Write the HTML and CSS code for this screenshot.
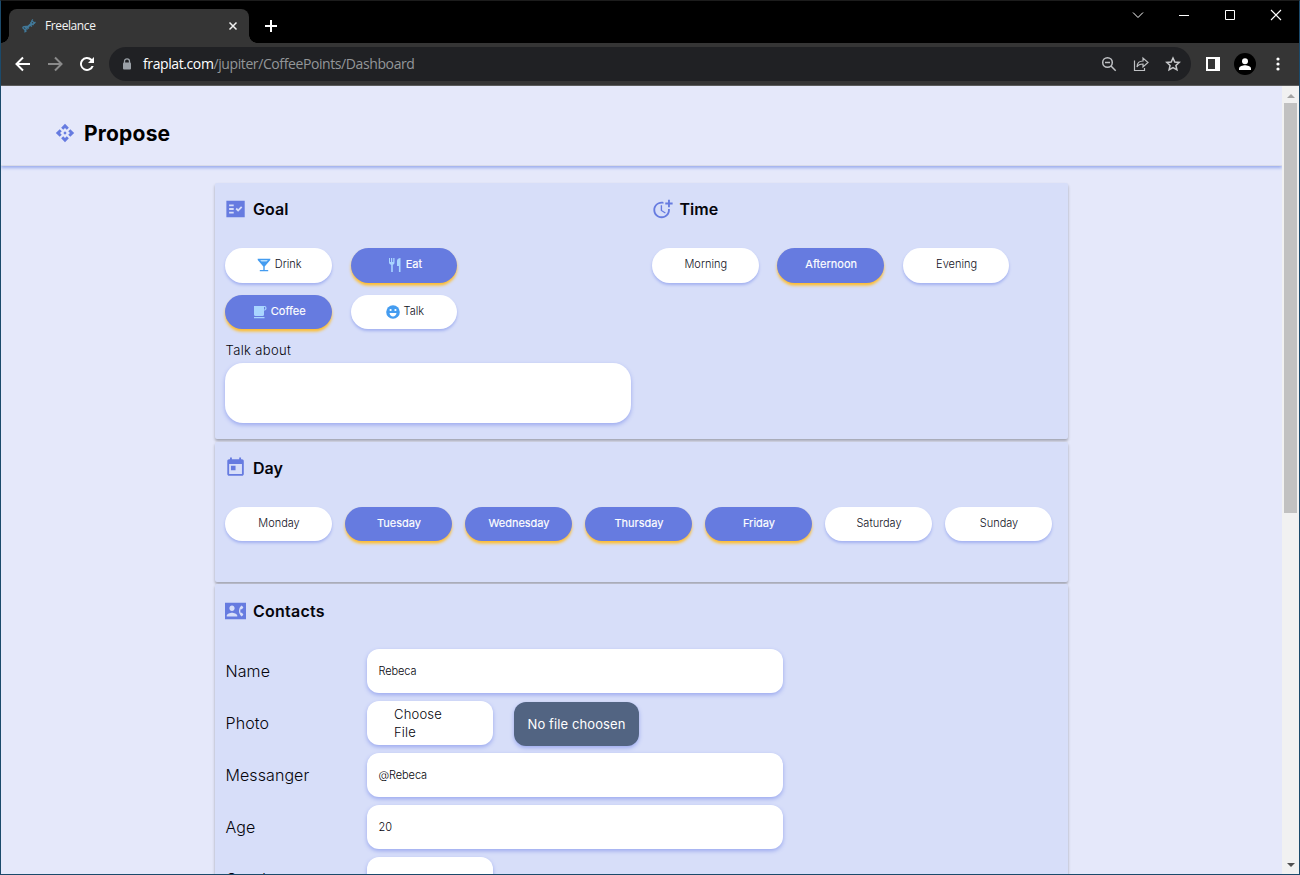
FILE: index.html
```html
<!DOCTYPE html>
<html lang="en">
<head>
<meta charset="utf-8">
<title>Freelance</title>
<link rel="stylesheet" href="styles.css">
</head>
<body>
<div class="window">
  <div class="titlebar">
    <div class="tab">
      <svg class="favicon" width="16" height="16" viewBox="0 0 16 16" fill="none" stroke="#41799a" stroke-width="1.200"><path d="M1.500 9.500C4 7 7 9.500 9 7.500S9.500 3 12 1.500M4 14.500C3 11 5 11.500 6.500 9.500S11 7.500 14.500 4M1.500 9.500l4 4M3.500 8.500l3 3M6 8.500l2 2M8 6.500l3 2M9.200 4.500l3.500 2.500M10.500 2.500l3.500 3M5.500 9.500L9.500 6"/></svg>
      <span class="tab-title">Freelance</span>
      <svg class="tab-close" width="10" height="10" viewBox="0 0 10 10" stroke="#f1f1f1" stroke-width="1.500"><path d="M1.500 1.500l7 7M8.500 1.500l-7 7"/></svg>
    </div>
    <svg class="new-tab" width="12" height="12" viewBox="0 0 12 12" stroke="#fff" stroke-width="2"><path d="M6 0v12M0 6h12"/></svg>
    <div class="controls">
      <svg width="12" height="12" viewBox="0 0 12 12" fill="none" stroke="#fff"><path d="M1 3.500l5 5 5-5"/></svg>
      <svg width="12" height="12" viewBox="0 0 12 12" fill="none" stroke="#fff"><path d="M1 6.500h10"/></svg>
      <svg width="12" height="12" viewBox="0 0 12 12" fill="none" stroke="#fff"><path d="M1.500 1.500h9v9h-9z"/></svg>
      <svg width="12" height="12" viewBox="0 0 12 12" fill="none" stroke="#fff" stroke-width="1.100"><path d="M1 1l10 10M11 1L1 11"/></svg>
    </div>
  </div>
  <div class="toolbar">
    <div class="nav">
      <svg width="16" height="16" viewBox="0 0 16 16" fill="none" stroke="#fff" stroke-width="2"><path d="M15 8H2M8 1.500L1.500 8 8 14.500"/></svg>
      <svg width="16" height="16" viewBox="0 0 16 16" fill="none" stroke="#8a8a8a" stroke-width="2"><path d="M1 8h13M8 1.500L14.500 8 8 14.500"/></svg>
      <svg width="16" height="16" viewBox="0 0 16 16"><path d="M13 3A7 7 0 1 0 14.700 10h-2.200A5 5 0 1 1 11.500 4.500L9 7h6V1z" fill="#fff"/></svg>
    </div>
    <div class="omnibox">
      <svg class="lock" width="10" height="12" viewBox="0 0 10 12"><path d="M2.500 5V3.300a2.500 2.500 0 0 1 5 0V5" fill="none" stroke="#9aa0a6" stroke-width="1.300"/><rect x="1" y="4.500" width="8" height="7" rx="1" fill="#9aa0a6"/></svg>
      <span class="url"><span class="host">fraplat.com</span>/jupiter/CoffeePoints/Dashboard</span>
      <div class="omni-icons">
        <svg width="16" height="16" viewBox="0 0 16 16" fill="none" stroke="#bfc1c4" stroke-width="1.500"><circle cx="6.500" cy="6.500" r="4.800"/><path d="M10 10l4.700 4.700M4 6.500h5"/></svg>
        <svg width="16" height="16" viewBox="0 0 16 16" fill="none" stroke="#bfc1c4" stroke-width="1.200"><path d="M1.500 4.500v10h10v-2.500M4 11c0-4 2.500-6 6-6V2l5 4.500-5 4.500V8C7 8 5 9 4 11z"/></svg>
        <svg width="16" height="16" viewBox="0 0 16 16" fill="none" stroke="#c8cacc" stroke-width="1.500"><path d="M8 2l1.800 4 4.400.4-3.300 3 1 4.400L8 11.500l-3.900 2.300 1-4.400-3.300-3L6.200 6z"/></svg>
      </div>
    </div>
    <svg class="panel" width="14" height="14" viewBox="0 0 14 14"><path fill="#fff" fill-rule="evenodd" d="M0 0h14v14H0zM2 2v10h7V2z"/></svg>
    <svg class="profile" width="22" height="22" viewBox="0 0 22 22"><circle cx="11" cy="11" r="11" fill="#000"/><circle cx="11" cy="8.200" r="3" fill="#fff"/><path d="M5 17v-1.500c0-2.500 4-3.300 6-3.300s6 .8 6 3.300V17z" fill="#fff"/></svg>
    <svg class="dots" width="4" height="14" viewBox="0 0 4 14" fill="#fff"><circle cx="2" cy="2" r="1.600"/><circle cx="2" cy="7" r="1.600"/><circle cx="2" cy="12" r="1.600"/></svg>
  </div>
  <div class="viewport">
    <main class="page">
      <header class="page-header">
        <svg width="20" height="20" viewBox="0 0 24 24" fill="#667be0"><path d="M14 12l-2 2-2-2 2-2 2 2zm-2-6l2.120 2.120 2.500-2.500L12 1 7.380 5.620l2.500 2.500L12 6zm-6 6l2.120-2.120-2.500-2.500L1 12l4.620 4.620 2.500-2.500L6 12zm12 0l-2.120 2.120 2.500 2.500L23 12l-4.620-4.620-2.500 2.500L18 12zm-6 6l-2.120-2.120-2.500 2.500L12 23l4.620-4.620-2.500-2.500L12 18z"/></svg>
        <h1>Propose</h1>
      </header>
      <div class="cards">
        <section class="card card-goal">
          <div class="half">
            <h2><svg width="22" height="22" viewBox="0.500 0 24 24"><path fill="#667be0" fill-rule="evenodd" d="M22 3H2v18h20zM10 17H5v-2h5zm0-4H5v-2h5zm0-4H5V7h5zm4.820 6L12 12.160l1.410-1.410 1.410 1.420L17.990 9l1.420 1.420z"/></svg><span>Goal</span></h2>
            <div class="chips wide">
              <div class="chip"><svg width="14" height="14" viewBox="2 2 20 20"><path fill="#449cf0" d="M21 5V3H3v2l8 9v5H6v2h12v-2h-5v-5z"/><path fill="#b5deff" d="M6.500 5h11l-1.800 2H8.300z"/></svg><span>Drink</span></div>
              <div class="chip on"><svg width="14" height="14" viewBox="0 0 14 14"><path fill="#a9d5ff" d="M1 0h1v4h1V0h1.200v4h1V0h1.300v4.500c0 1.400-.8 2-1.700 2.300V14H3.200V6.800C2 6.500 1 5.800 1 4.500zM9 3c0-1.700 1.300-2.700 3.500-3v14h-1.600V8H9z"/></svg><span>Eat</span></div>
              <div class="chip on"><svg width="14" height="14" viewBox="0 0 14 14"><path fill="#a9d5ff" fill-rule="evenodd" d="M1 1h10.500a2 2 0 0 1 2 2v.5a2 2 0 0 1-2 2H11V9.500a1.500 1.500 0 0 1-1.500 1.500h-7A1.500 1.500 0 0 1 1 9.500zM11 2v2.500h1.200V2zM1 12h10.500v1.300H1z"/></svg><span>Coffee</span></div>
              <div class="chip"><svg width="14" height="14" viewBox="0 0 14 14"><circle cx="7" cy="7" r="6.800" fill="#449cf0"/><circle cx="4.600" cy="5" r="1.100" fill="#fff"/><circle cx="9.400" cy="5" r="1.100" fill="#fff"/><path d="M3.500 8h7c-.4 2.300-1.700 3.400-3.500 3.400S3.900 10.300 3.500 8z" fill="#fff"/></svg><span>Talk</span></div>
            </div>
            <label class="talk-label" for="about">Talk about</label>
            <textarea class="talk-box" id="about"></textarea>
          </div>
          <div class="half">
            <h2><svg width="22" height="22" viewBox="0.500 0 24 24" fill="#667be0"><path d="M10 8v6l4.700 2.900.8-1.200-4-2.400V8z"/><path d="M17.920 12c.05.330.080.660.080 1 0 3.900-3.100 7-7 7s-7-3.100-7-7 3.100-7 7-7c.7 0 1.370.1 2 .29V4.230C12.360 4.080 11.690 4 11 4c-5 0-9 4-9 9s4 9 9 9 9-4 9-9c0-.34-.02-.67-.06-1z"/><path d="M20 5V2h-2v3h-3v2h3v3h2V7h3V5z"/></svg><span>Time</span></h2>
            <div class="chips wide">
              <div class="chip">Morning</div>
              <div class="chip on">Afternoon</div>
              <div class="chip">Evening</div>
            </div>
          </div>
        </section>
        <section class="card card-day">
          <h2><svg width="22" height="22" viewBox="0.500 0.500 24 24" fill="#667be0"><path d="M19 3h-1V1h-2v2H8V1H6v2H5c-1.110 0-2 .9-2 2v14c0 1.100.89 2 2 2h14c1.100 0 2-.9 2-2V5c0-1.100-.9-2-2-2zm0 16H5V8h14zM7 10h5v5H7z"/></svg><span>Day</span></h2>
          <div class="chips">
            <div class="chip">Monday</div>
            <div class="chip on">Tuesday</div>
            <div class="chip on">Wednesday</div>
            <div class="chip on">Thursday</div>
            <div class="chip on">Friday</div>
            <div class="chip">Saturday</div>
            <div class="chip">Sunday</div>
          </div>
        </section>
        <section class="card card-contacts">
          <h2><svg width="21" height="22" viewBox="0 0 24 24" preserveAspectRatio="none"><path fill="#667be0" fill-rule="evenodd" d="M24 3H0v18h24zM8 6c1.660 0 3 1.340 3 3s-1.340 3-3 3-3-1.340-3-3 1.340-3 3-3zm6 12H2v-1c0-2 4-3.100 6-3.100s6 1.100 6 3.100zm3.850-4h1.640L21 16l-1.990 1.990c-1.310-.98-2.280-2.380-2.730-3.990-.18-.64-.28-1.310-.28-2s.1-1.360.28-2c.45-1.620 1.420-3.010 2.730-3.990L21 8l-1.510 2h-1.640c-.22.63-.35 1.300-.35 2s.13 1.370.35 2z"/></svg><span>Contacts</span></h2>
          <div class="form">
            <div class="row"><span class="label">Name</span><div class="input">Rebeca</div></div>
            <div class="row"><span class="label">Photo</span><div class="file">Choose File</div><div class="status">No file choosen</div></div>
            <div class="row"><span class="label">Messanger</span><div class="input">@Rebeca</div></div>
            <div class="row"><span class="label">Age</span><div class="input">20</div></div>
            <div class="row"><span class="label">Gender</span><div class="file"></div></div>
          </div>
        </section>
      </div>
    </main>
    <div class="scrollbar">
      <svg width="8" height="4" viewBox="0 0 8 4"><path d="M0 4l4-4 4 4z" fill="#a3a3a3"/></svg>
      <div class="thumb"></div>
      <svg class="down" width="8" height="4" viewBox="0 0 8 4"><path d="M0 0l4 4 4-4z" fill="#505050"/></svg>
    </div>
  </div>
</div>
</body>
</html>
```
FILE: styles.css
```css
* { box-sizing: border-box; }
body { margin: 0; font-family: Inter, "Liberation Sans", sans-serif; color: #05050c; overflow: hidden; }
svg { display: block; flex: none; }
h1, h2 { margin: 0; font-weight: 600; }

.window { width: 1300px; height: 875px; display: flex; flex-direction: column; border: 1px solid #1b4a6b; border-top-color: #1c1c1c; }

.titlebar { height: 42px; flex: none; background: #000; display: flex; align-items: center; font-family: "Open Sans", "Noto Sans", sans-serif; }
.tab { align-self: flex-end; width: 240px; height: 34px; margin-left: 8px; background: #353535; border-radius: 8px 8px 0 0; display: flex; align-items: center; padding: 0 11px 0 12px; position: relative; }
.tab::before, .tab::after { content: ""; position: absolute; bottom: 0; width: 8px; height: 8px; }
.tab::before { left: -8px; background: radial-gradient(circle at 0 0, #000 7.500px, #353535 8px); }
.tab::after { right: -8px; background: radial-gradient(circle at 100% 0, #000 7.500px, #353535 8px); }
.tab-title { margin-left: 8px; font-size: 12px; letter-spacing: -.4px; color: #f4f4f4; flex: 1; padding-bottom: 1px; }
.new-tab { margin: 8px 0 0 16px; }
.controls { margin: 0 17px 14px auto; display: flex; gap: 34px; }

.toolbar { height: 43px; flex: none; background: #353535; border-bottom: 1px solid #5b5b5b; display: flex; align-items: center; padding-left: 14px; }
.nav { display: flex; gap: 16px; }
.omnibox { width: 1082px; height: 34px; margin-left: 14px; background: #202124; border-radius: 17px; display: flex; align-items: center; padding: 0 10px 0 13px; font-family: "Open Sans", "Noto Sans", sans-serif; }
.url { margin-left: 11px; font-size: 14px; letter-spacing: -.4px; color: #939699; flex: 1; padding-bottom: 1px; }
.host { color: #fff; }
.omni-icons { display: flex; gap: 16px; }
.panel { margin-left: 15px; }
.profile { margin-left: 14px; }
.dots { margin-left: 19.500px; }

.viewport { flex: 1; min-height: 0; display: flex; }
.page { flex: 1; background: #e5e8fa; overflow: hidden; }
.page-header { height: 80px; border-bottom: 1px solid #d9dbe8; box-shadow: 0 2px 3px #9badee; display: flex; align-items: center; padding: 15px 0 0 54px; }
.page-header h1 { font-size: 21px; letter-spacing: .2px; margin-left: 9px; font-weight: 700; color: #000; }

.cards { margin: 17px 0 0 214px; width: 853px; display: flex; flex-direction: column; gap: 2.500px; }
.card { background: #d7def9; padding: 14px 10px 0; box-shadow: 0 2px 3px rgba(0,0,0,.3); border-radius: 2px; flex: none; }
.card h2 { display: flex; align-items: center; height: 24px; font-size: 16px; letter-spacing: .05px; }
.card h2 span { margin-left: 6px; }
.half + .half h2 span { margin-left: 5.500px; }
.card-goal { height: 256px; display: grid; grid-template-columns: 427px 1fr; }
.card-day { height: 140px; }
.card-contacts { height: 400px; padding-top: 14.500px; }
.card-contacts h2 { letter-spacing: .25px; }
.card-contacts h2 span { margin-left: 7px; }

.chips { display: grid; grid-template-columns: repeat(7, 107px); column-gap: 13px; row-gap: 12px; margin-top: 27px; }
.chips.wide { grid-template-columns: repeat(2, 106.500px); column-gap: 19.100px; }
.half + .half .chips { grid-template-columns: repeat(3, 106.600px); column-gap: 18.800px; }
.chip { height: 34.500px; border-radius: 18px; background: #fff; box-shadow: 0 2px 3px #a3b1f0; display: flex; align-items: center; justify-content: center; gap: 4px; padding: 0 0 2px 1px; font-size: 11px; font-weight: 300; color: #10101c; }
.chip svg { margin-top: 2px; }
.half:first-child .chip { padding-left: 2px; }
.chip.on { background: #667be0; box-shadow: 0 2.500px 3px #ffbd2b; color: #fff; font-weight: 400; -webkit-text-stroke: .15px #fff; }

.talk-label { display: block; margin: 12px 0 4px .5px; font-size: 13px; line-height: 18px; font-weight: 300; letter-spacing: .35px; }
.talk-box { display: block; width: 406px; height: 60px; border: 0; border-radius: 18px; resize: none; background: #fff; box-shadow: 0 2px 4px #9ba9ef; }

.form { margin-top: 26.500px; display: flex; flex-direction: column; gap: 8px; }
.row { height: 44px; display: flex; align-items: center; flex: none; }
.label { width: 142px; padding-left: .5px; font-size: 16px; font-weight: 300; letter-spacing: .08px; }
.input, .file, .status { height: 44px; border-radius: 12px; box-shadow: 0 2px 4px #9ba9ef; display: flex; align-items: center; background: #fff; }
.input { width: 416px; padding-left: 11.500px; font-size: 11px; font-weight: 300; letter-spacing: -.1px; }
.file { width: 126px; padding: 0 27px; font-size: 13px; line-height: 18px; font-weight: 300; letter-spacing: .2px; }
.status { width: 125px; margin: 2px 0 0 21px; justify-content: center; background: #526482; color: #fff; font-size: 13px; letter-spacing: .1px; }

.scrollbar { width: 17px; background: #f1f1f1; display: flex; flex-direction: column; align-items: center; padding: 8px 0 7px; }
.thumb { width: 13px; height: 410px; margin-top: 5px; background: #c1c1c1; }
.down { margin-top: auto; }
```
